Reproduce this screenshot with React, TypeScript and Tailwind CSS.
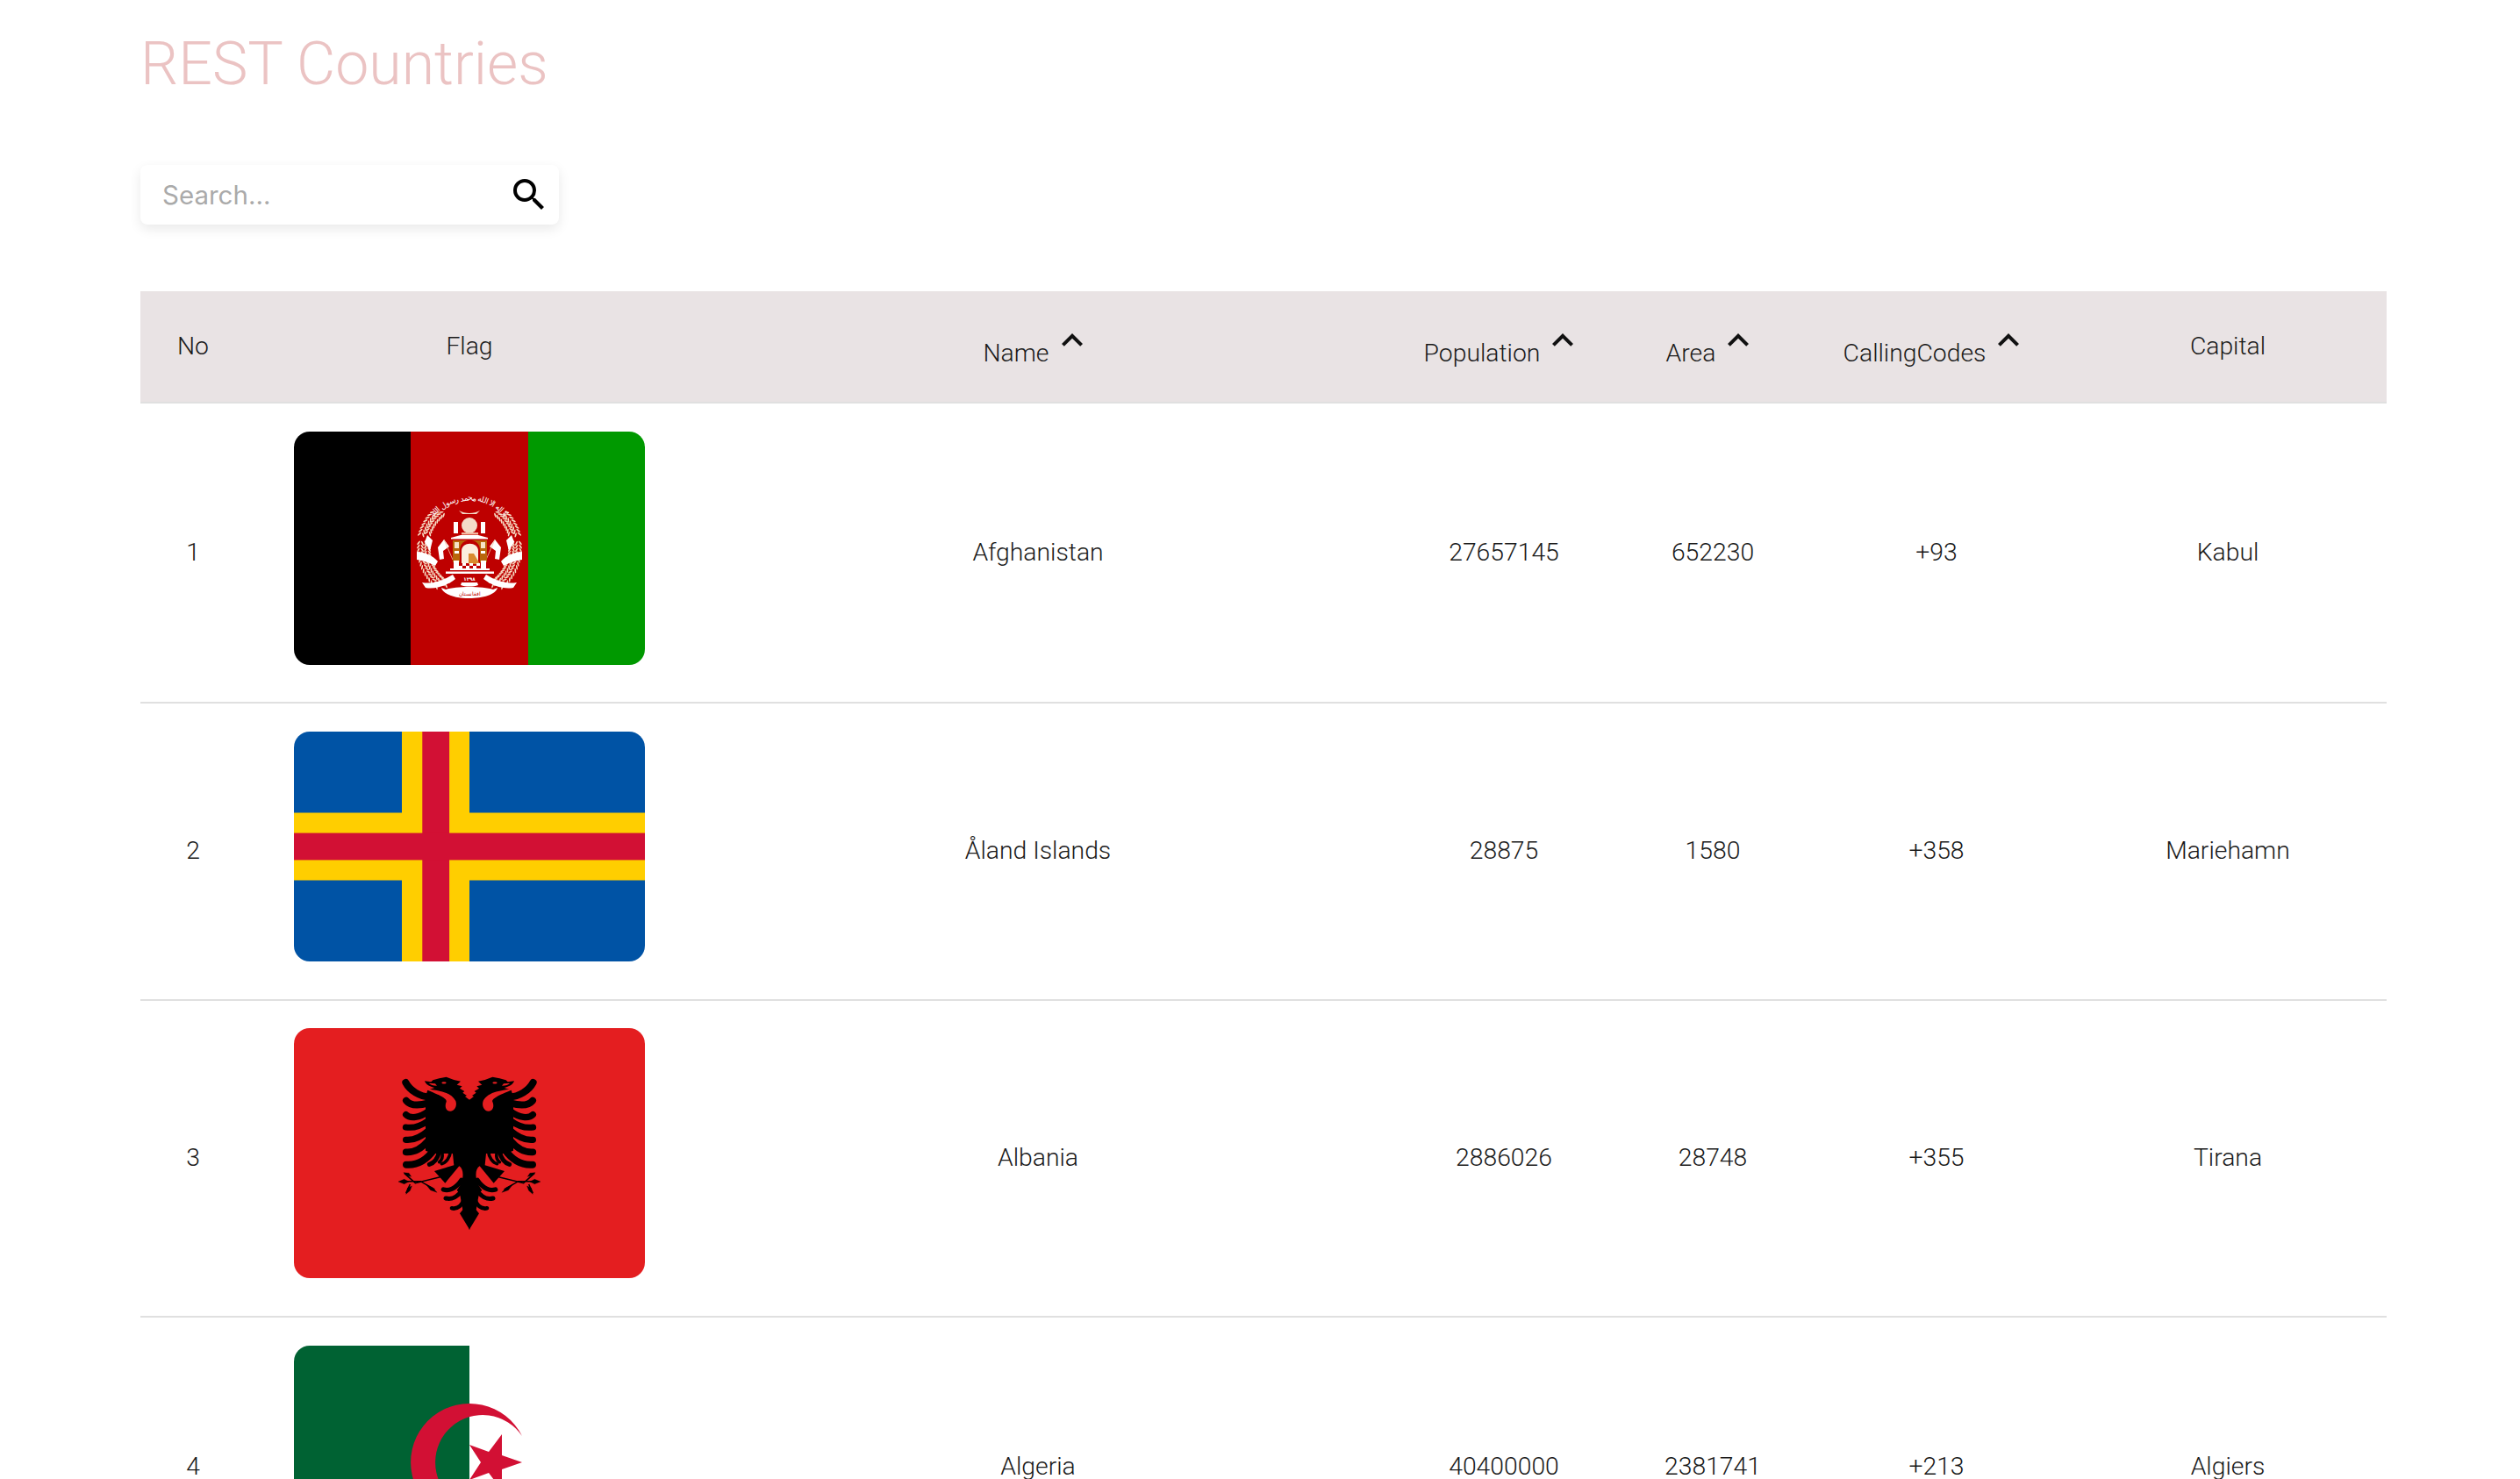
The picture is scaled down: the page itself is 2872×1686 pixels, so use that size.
import React from "react";
import { MdKeyboardArrowUp, MdSearch } from "react-icons/md";

const COLUMNS = "grid grid-cols-[120px_510px_786px_276px_200px_310px_358px] items-center text-center";

// One side of the Afghan wreath; the other side is mirrored in the flag
function WreathSide() {
  const grains: React.ReactNode[] = [];
  [
    { r: 48, from: 190, to: 118 },
    { r: 56, from: 186, to: 126 },
    { r: 50, from: 232, to: 198 },
    { r: 57, from: 224, to: 192 },
  ].forEach((stalk, s) => {
    for (let a = stalk.from, i = 0; a > stalk.to; a -= 4, i++) {
      [-1, 1].forEach((side) => {
        const rad = (a * Math.PI) / 180;
        const x = 200 + (stalk.r + side * 2.2) * Math.cos(rad);
        const y = 133 + (stalk.r + side * 2.2) * Math.sin(rad);
        grains.push(
          <ellipse key={`${s}-${i}-${side}`} cx={x} cy={y} rx="2.8" ry="0.9" transform={`rotate(${a - 90 + side * 32} ${x} ${y})`} fill="#f7dcc4" />
        );
      });
    }
  });
  return (
    <g>
      {grains}
      <path d="M140 137 C148 137 158 141 164 148 L161 153 C153 149 147 147 140 146 Z" fill="#fff" />
      <path d="M146 172 C158 174 170 170 181 163 L184 168 C174 176 160 180 150 178 Z" fill="#fff" />
      <path d="M152 118 L158 124 L155 136 L149 126 Z" fill="#fff" />
      <path d="M171 123 L177 131 L170 136 L171 145 L166 146 L164 132 Z" fill="#fff" />
      <path d="M171 123 L181 146" stroke="#f0c8a8" strokeWidth="0.8" />
    </g>
  );
}

function AfghanistanFlag() {
  return (
    <svg viewBox="0 0 400 266" preserveAspectRatio="none" className="block h-full w-full">
      <rect width="134" height="266" fill="#000" />
      <rect x="133" width="134" height="266" fill="#be0000" />
      <rect x="267" width="133" height="266" fill="#009900" />
      <WreathSide />
      <g transform="translate(400 0) scale(-1 1)">
        <WreathSide />
      </g>
      <defs>
        <path id="shahada" d="M156 102 A53 53 0 0 1 244 102" />
      </defs>
      <text fontFamily="'DejaVu Sans', sans-serif" fontSize="9" fill="#fff" textAnchor="middle">
        <textPath href="#shahada" startOffset="50%" textLength="92">لا اله الا الله محمد رسول الله</textPath>
      </text>
      <path d="M188 90 C195 94 205 94 212 90 L208 94 L192 94 Z" fill="#f5dcc8" />
      {/* mosque */}
      <circle cx="200" cy="107" r="9" fill="#f4dcc8" />
      <rect x="182" y="103" width="5" height="13" fill="#fff" />
      <rect x="213" y="103" width="5" height="13" fill="#fff" />
      <rect x="191" y="115" width="19" height="2.5" fill="#f3b8a0" />
      <path d="M190 118 H210 L221 121 V122.5 H179 V121 Z" fill="#fff" />
      <rect x="181" y="124" width="39" height="25" fill="#b8660b" />
      <rect x="183" y="126" width="5" height="7" fill="#f6e4c8" />
      <rect x="213" y="126" width="5" height="7" fill="#f6e4c8" />
      <rect x="183" y="136" width="5" height="3" fill="#fff" />
      <rect x="213" y="136" width="5" height="3" fill="#fff" />
      <path d="M189 150 V135 C189 120 212 120 212 135 V150 Z" fill="#be0000" />
      <path d="M191 150 V136 C191 125 210 125 210 136 V150 Z" fill="#fbeedd" />
      <path d="M199 139 L205 139 L212 151 H199 Z" fill="#d98a2e" />
      <path d="M192 150 h4 v3 h-4z M200 150 h4 v3 h-4z M208 150 h4 v3 h-4z M188 153 h4 v3 h-4z M196 153 h4 v3 h-4z M204 153 h4 v3 h-4z" fill="#fff" />
      <rect x="182" y="147" width="6" height="9" fill="#fff" />
      <rect x="213" y="147" width="6" height="9" fill="#fff" />
      <rect x="178" y="156" width="45" height="2" fill="#fff" />
      <rect x="173" y="159.5" width="55" height="2.5" fill="#fff" />
      {/* date and banner */}
      <text x="200" y="170" textAnchor="middle" fontFamily="'DejaVu Sans', sans-serif" fontSize="5.5" fontWeight="700" fill="#fff">۱۲۹۸</text>
      <path d="M191 172 h18 l1 3 c-6 2 -14 2 -20 0 Z" fill="#fff" />
      <path d="M173 180 C185 176 215 176 227 180 L232 178 C228 194 172 194 168 178 Z" fill="#fff" />
      <text x="200" y="186.5" textAnchor="middle" fontFamily="'DejaVu Sans', sans-serif" fontSize="6" fill="#be0000">افغانستان</text>
    </svg>
  );
}

function AlandFlag() {
  return (
    <svg viewBox="0 0 400 262" preserveAspectRatio="none" className="block h-full w-full">
      <rect width="400" height="262" fill="#0053a5" />
      <rect x="123" width="77" height="262" fill="#ffce00" />
      <rect y="92.5" width="400" height="77" fill="#ffce00" />
      <rect x="146.3" width="30.8" height="262" fill="#d21034" />
      <rect y="115.6" width="400" height="30.8" fill="#d21034" />
    </svg>
  );
}

const FEATHERS = [
  { d: "M180 152 C145 150 112 130 97 102", w: 24 },
  { d: "M175 172 C140 182 112 180 99 164", w: 24 },
  { d: "M175 200 C145 224 112 226 98 212", w: 22 },
  { d: "M175 232 C145 254 115 258 97 255", w: 21 },
  { d: "M175 266 C145 292 118 300 98 298", w: 22 },
  { d: "M175 300 C150 330 125 342 98 340", w: 23 },
  { d: "M195 330 C170 366 140 386 99 383", w: 24 },
];

// Left half of the Albanian eagle, coordinates are 3x the flag's
function EagleHalf() {
  return (
    <g>
      <path
        fill="#000"
        d="M316 162 L300 150 L306 147 L292 137 L298 132 L282 122 L290 115 L272 110 L285 98 L262 93 L236 83 L212 88 L190 94 L184 100 L162 97 C166 110 180 116 196 120 L172 128 L165 150 L165 335 L190 345 L258 345 L262 385 L195 405 L232 446 L280 388 C298 398 298 440 272 470 L296 500 L298 530 L282 550 L316 606 Z"
      />
      <path d="M280 470 L316 400 L316 600 L296 560 Z" fill="#000" />
      <path fill="#e41e20" d="M198 106 L176 104 C182 110 190 113 204 113 Z" />
      <ellipse cx="228" cy="103" rx="8" ry="3.5" fill="#e41e20" />
      <path
        fill="#e41e20"
        d="M168 122 C200 130 250 130 268 165 C274 182 264 200 250 200 C235 200 229 184 236 168 C238 160 232 152 172 128 Z"
      />
      {FEATHERS.map((f) => (
        <path key={f.d} d={f.d} fill="none" stroke="#000" strokeWidth={f.w} strokeLinecap="round" />
      ))}
      {/* small inner feathers */}
      <path d="M212 338 C208 356 198 376 178 382" fill="none" stroke="#000" strokeWidth="15" strokeLinecap="round" />
      <path d="M222 345 C224 358 220 368 212 374" fill="none" stroke="#000" strokeWidth="11" strokeLinecap="round" />
      <path d="M250 340 C248 358 236 376 220 380" fill="none" stroke="#000" strokeWidth="11" strokeLinecap="round" />
      {/* tail */}
      <path d="M226 468 C244 474 268 466 288 436" fill="none" stroke="#000" strokeWidth="16" strokeLinecap="round" />
      <path d="M234 498 C254 504 276 492 292 468" fill="none" stroke="#000" strokeWidth="15" strokeLinecap="round" />
      <path d="M255 532 C274 536 290 522 298 498" fill="none" stroke="#000" strokeWidth="14" strokeLinecap="round" />
      {/* talons */}
      <path d="M215 425 L130 446 L92 412 M80 440 L148 440 L196 468 M112 450 L98 480" fill="none" stroke="#000" strokeWidth="4.5" />
      <path d="M72 441 L92 433 L108 441 L92 449 Z M90 410 L108 412 L116 424 L100 420 Z M98 484 L104 462 L118 456 L112 472 Z M166 450 L190 462 L204 478 L182 470 Z" fill="#000" stroke="#000" strokeWidth="1" />
    </g>
  );
}

function AlbaniaFlag() {
  return (
    <svg viewBox="0 0 400 285" preserveAspectRatio="none" className="block h-full w-full">
      <rect width="400" height="285" fill="#e41e20" />
      <g transform="translate(95 28) scale(0.3333)">
        <EagleHalf />
        <g transform="translate(630 0) scale(-1 1)">
          <EagleHalf />
        </g>
      </g>
    </svg>
  );
}

function AlgeriaFlag() {
  return (
    <svg viewBox="0 0 400 266" preserveAspectRatio="none" className="block h-full w-full">
      <rect width="400" height="266" fill="#fff" />
      <rect width="200" height="266" fill="#006233" />
      <path d="M260 103 A67 67 0 1 0 260 163 A54 54 0 1 1 260 103 Z" fill="#d21034" />
      <path d="M237 101 L237 125 L260 133 L237 141 L237 165 L222 145 L200 153 L213 133 L200 113 L222 121 Z" fill="#d21034" />
    </svg>
  );
}

const COUNTRIES = [
  { no: 1, flag: <AfghanistanFlag />, flagH: "h-[266px]", name: "Afghanistan", population: "27657145", area: "652230", code: "+93", capital: "Kabul", pad: "pt-[32px] pb-[42px]" },
  { no: 2, flag: <AlandFlag />, flagH: "h-[262px]", name: "Åland Islands", population: "28875", area: "1580", code: "+358", capital: "Mariehamn", pad: "pt-[32px] pb-[43px]" },
  { no: 3, flag: <AlbaniaFlag />, flagH: "h-[285px]", name: "Albania", population: "2886026", area: "28748", code: "+355", capital: "Tirana", pad: "pt-[31px] pb-[43px]" },
  { no: 4, flag: <AlgeriaFlag />, flagH: "h-[266px]", name: "Algeria", population: "40400000", area: "2381741", code: "+213", capital: "Algiers", pad: "pt-[32px] pb-[41px]" },
];

function SortHeader({ label }: { label: string }) {
  return (
    <div className="flex items-center justify-center">
      <span className="mt-[15px]">{label}</span>
      <MdKeyboardArrowUp className="mb-[15px] ml-[2px] h-12 w-12 shrink-0 text-[#111]" />
    </div>
  );
}

export default function App() {
  return (
    <div className="h-[1686px] overflow-hidden bg-white pr-[152px] pl-[160px] font-['Roboto',sans-serif] text-[28.3px] leading-[32px] font-light text-[#1a1a1a]">
      <h1 className="pt-[35px] text-[68px] leading-[76px] font-light text-[#ebc3c3]">REST Countries</h1>

      <div className="mt-[77px] flex h-[68px] w-[477px] items-center rounded-lg bg-white pr-[10px] pl-[25px] shadow-[0_5px_14px_rgba(0,0,0,0.09)]">
        <input
          placeholder="Search..."
          className="min-w-0 flex-1 font-['Inter',sans-serif] text-[29.5px] font-normal outline-none placeholder:text-[#aaaaaa]"
        />
        <MdSearch className="h-12 w-12 shrink-0 text-black" />
      </div>

      <div className={`${COLUMNS} mt-[76px] h-[128px] border-b-2 border-[#e0e0e0] bg-[#e9e3e4]`}>
        <div>No</div>
        <div>Flag</div>
        <SortHeader label="Name" />
        <SortHeader label="Population" />
        <SortHeader label="Area" />
        <SortHeader label="CallingCodes" />
        <div className="pr-[4px]">Capital</div>
      </div>

      {COUNTRIES.map((c) => (
        <div key={c.no} className={`${COLUMNS} border-b-2 border-[#e0e0e0] ${c.pad}`}>
          <div className="mt-[10px]">{c.no}</div>
          <div className={`mx-auto w-[400px] overflow-hidden rounded-[18px] ${c.flagH}`}>{c.flag}</div>
          <div className="mt-[10px]">{c.name}</div>
          <div className="mt-[10px]">{c.population}</div>
          <div className="mt-[10px]">{c.area}</div>
          <div className="mt-[10px]">{c.code}</div>
          <div className="mt-[10px] pr-[4px]">{c.capital}</div>
        </div>
      ))}
    </div>
  );
}
